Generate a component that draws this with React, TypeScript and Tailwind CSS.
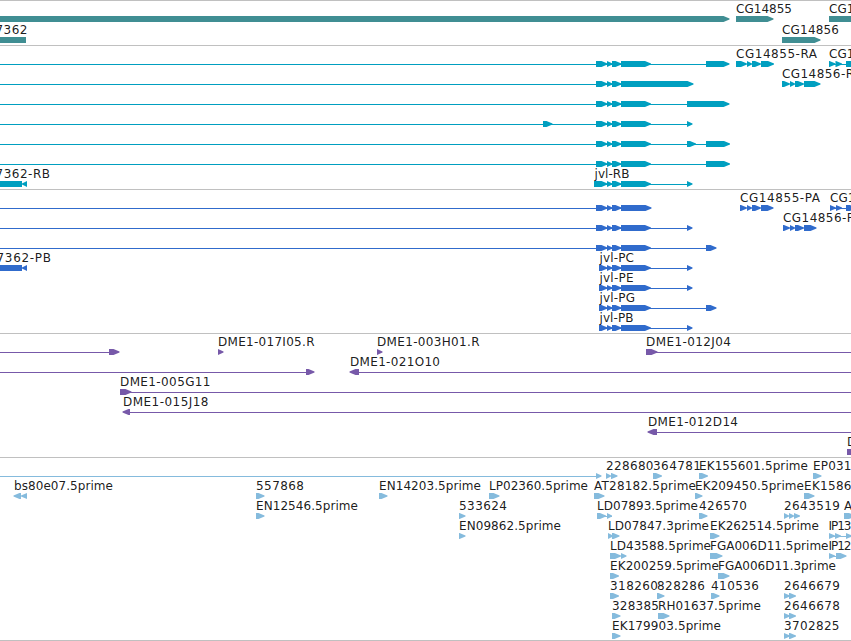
type Label = { text: string; x: number; width?: number };
type Feature = { from: number; to: number; reverse?: boolean; flat?: boolean };
type Row = { labels?: Label[]; features?: Feature[]; introns?: [number, number][] };

const EDGE = 851;

const label = (text: string, x: number, end?: number): Label => ({
  text,
  x,
  width: end === undefined ? undefined : end - x,
});

const fwd = (...spans: [number, number][]): Feature[] => spans.map(([from, to]) => ({ from, to }));
const rev = (...spans: [number, number][]): Feature[] =>
  spans.map(([from, to]) => ({ from, to, reverse: true }));
const flat = (from: number, to: number): Feature => ({ from, to, flat: true });

// Exons shared by every jvl isoform, after the first one
const jvl = (first: number, ...rest: [number, number][]) =>
  fwd([first, 607.5], [607, 612.5], [612, 621.5], ...rest);

const genes: Row[] = [
  {
    labels: [label("CG14855", 736, 792), label("CG1", 829)],
    features: [...fwd([-10, 729.5], [736, 773.5]), flat(829, EDGE)],
  },
  {
    labels: [label("7362", -4.5, 27.5), label("CG14856", 782, 839)],
    features: [flat(0, 26), ...fwd([782, 820.5])],
  },
];

const transcripts: Row[] = [
  {
    labels: [label("CG14855-RA", 736, 817), label("CG1", 829)],
    introns: [[0, 706], [829, EDGE]],
    features: [
      ...jvl(596, [621, 651], [706, 729.5]),
      ...fwd([736, 747], [747, 752], [752, 761], [761, 774]),
      ...fwd([829, 835.5], [835.5, 842], [846, 858]),
    ],
  },
  {
    labels: [label("CG14856-R", 782, 854)],
    introns: [[0, 621]],
    features: [
      ...jvl(596, [621, 693.5]),
      ...fwd([782, 790], [790, 795], [795, 804], [804, 820.5]),
    ],
  },
  { introns: [[0, 687]], features: jvl(596, [621, 651], [687, 729.5]) },
  { introns: [[0, 687]], features: [...fwd([543, 552.5]), ...jvl(596, [621, 651], [687, 692.5])] },
  { introns: [[0, 706]], features: jvl(596, [621, 651], [687, 696], [706, 730]) },
  { introns: [[0, 706]], features: jvl(596, [621, 651], [706, 730]) },
  {
    labels: [label("7362-RB", -4.5, 50), label("jvl-RB", 594.5, 629.5)],
    introns: [[594, 687]],
    features: [flat(0, 22), ...rev([22, 27]), ...jvl(594, [621, 651], [687, 692.5])],
  },
];

const proteins: Row[] = [
  {
    labels: [label("CG14855-PA", 740, 820), label("CG1", 830)],
    introns: [[0, 621], [830, EDGE]],
    features: [
      ...jvl(596, [621, 651.5]),
      ...fwd([740, 747], [747, 752], [752, 761], [761, 773.5]),
      ...fwd([830, 836], [836, 842], [846, 856]),
    ],
  },
  {
    labels: [label("CG14856-P", 783, 854)],
    introns: [[0, 687]],
    features: [
      ...jvl(596, [621, 651], [687, 692.5]),
      ...fwd([783, 790], [790, 795], [795, 804], [804, 816.5]),
    ],
  },
  { introns: [[0, 706]], features: jvl(596, [621, 651], [706, 716.5]) },
  {
    labels: [label("7362-PB", -3.5, 51), label("jvl-PC", 599.5, 634)],
    introns: [[599, 687]],
    features: [flat(0, 22), ...rev([22, 27]), ...jvl(599, [621, 651], [687, 692.5])],
  },
  {
    labels: [label("jvl-PE", 599.5, 633.5)],
    introns: [[599, 687]],
    features: jvl(599, [621, 651], [687, 692.5]),
  },
  {
    labels: [label("jvl-PG", 599.5, 635)],
    introns: [[599, 706]],
    features: jvl(599, [621, 651], [706, 716.5]),
  },
  {
    labels: [label("jvl-PB", 599.5, 633.5)],
    introns: [[599, 687]],
    features: jvl(599, [621, 651], [687, 692.5]),
  },
];

const clones: Row[] = [
  {
    labels: [label("DME1-017I05.R", 218, 314.5), label("DME1-003H01.R", 377, 479.5), label("DME1-012J04", 646, 731)],
    introns: [[0, 109], [646, EDGE]],
    features: fwd([109, 119.5], [218, 223.5], [377, 382.5], [646, 657.5]),
  },
  {
    labels: [label("DME1-021O10", 350, 440)],
    introns: [[0, 306], [359, EDGE]],
    features: [...fwd([306, 314.5]), ...rev([349.5, 359])],
  },
  { labels: [label("DME1-005G11", 120, 210.5)], introns: [[120, EDGE]], features: fwd([120, 131.5]) },
  { labels: [label("DME1-015J18", 123, 208.5)], introns: [[130, EDGE]], features: rev([122.5, 130]) },
  { labels: [label("DME1-012D14", 648, 738)], introns: [[657, EDGE]], features: rev([647.5, 657]) },
  { labels: [label("D", 847)], features: [flat(847, EDGE)] },
];

const ests: Row[] = [
  {
    labels: [
      label("228680", 606, 653.5),
      label("364781", 653, 701),
      label("EK155601.5prime", 699, 808),
      label("EP031", 813, 851.5),
    ],
    introns: [[0, 596]],
    features: fwd([596, 601.5], [606, 611], [611, 617.5], [653, 662], [699, 708], [813, 821.5]),
  },
  {
    labels: [
      label("bs80e07.5prime", 14, 113),
      label("557868", 256, 304),
      label("EN14203.5prime", 379, 481),
      label("LP02360.5prime", 489, 588),
      label("AT28182.5prime", 594, 696),
      label("EK209450.5prime", 695, 804),
      label("EK1586", 804, 851.5),
    ],
    features: [
      ...rev([13.5, 21], [21, 27]),
      ...fwd([256, 264.5], [379, 387.5], [489, 499.5], [594, 604.5], [695, 702.5], [804, 814.5]),
    ],
  },
  {
    labels: [
      label("EN12546.5prime", 256, 358),
      label("533624", 459, 507),
      label("LD07893.5prime", 597, 698),
      label("426570", 699, 747),
      label("2643519", 784, 840),
      label("A", 844),
    ],
    introns: [[597, 612]],
    features: fwd(
      [256, 264.5], [459, 465.5], [597, 606], [607, 612], [699, 707.5],
      [784, 789], [789, 794], [794, 800], [844, 855],
    ),
  },
  {
    labels: [
      label("EN09862.5prime", 459, 561),
      label("LD07847.3prime", 608, 709),
      label("EK262514.5prime", 710, 819),
      label("IP13", 828.5, 851.5),
    ],
    introns: [[829, EDGE]],
    features: fwd([459, 465.5], [608, 613], [612, 619.5], [710, 719.5], [829, 835], [835, 841], [846, 852]),
  },
  {
    labels: [
      label("LD43588.5prime", 610, 711),
      label("FGA006D11.5prime", 710, 828.5),
      label("IP12", 828.5, 851.5),
    ],
    introns: [[829, 840]],
    features: fwd([610, 621], [621, 626.5], [710, 722.5], [829, 835], [836, 846.5]),
  },
  {
    labels: [label("EK200259.5prime", 610, 719), label("FGA006D11.3prime", 718, 836)],
    features: fwd([610, 619], [718, 729.5]),
  },
  {
    labels: [
      label("318260", 610, 658),
      label("828286", 657, 705),
      label("410536", 711, 759),
      label("2646679", 784, 840),
    ],
    features: fwd([610, 619], [657, 664.5], [711, 719.5], [784, 790], [789, 796]),
  },
  {
    labels: [label("328385", 612, 659), label("RH01637.5prime", 658, 761), label("2646678", 784, 840)],
    features: fwd([612, 620.5], [658, 669.5], [784, 790], [789, 796]),
  },
  {
    labels: [label("EK179903.5prime", 612, 721), label("3702825", 784, 839.5)],
    features: fwd([612, 620.5], [784, 790], [789, 796]),
  },
];

// Rounded arrow: full height up to the head, a shoulder, then a one pixel tip
function outline({ from, to, reverse, flat }: Feature) {
  if (flat) return `${from},15 ${to},15 ${to},21 ${from},21`;
  const head = Math.min(6, to - from);
  const tip = reverse ? from : to;
  const back = reverse ? to : from;
  const dir = reverse ? 1 : -1;
  const neck = tip + dir * head;
  const shoulder = tip + dir * head * 0.4;
  return `${back},15 ${neck},15 ${shoulder},16.4 ${tip},17.6 ${tip},18.4 ${shoulder},19.6 ${neck},21 ${back},21`;
}

function FeatureRow({ row, className }: { row: Row; className: string }) {
  return (
    <svg width={EDGE} className={`block shrink-0 overflow-visible ${className}`}>
      {row.introns?.map(([from, to]) => (
        <rect key={from} x={from} y={18} width={to - from} height={1} fill="currentColor" />
      ))}
      {row.features?.map((f) => (
        <polygon key={f.from} points={outline(f)} fill="currentColor" />
      ))}
      {row.labels?.map((l) => (
        <text key={l.x} x={l.x} y={12} textLength={l.width} className="fill-black/90">
          {l.text}
        </text>
      ))}
    </svg>
  );
}

function Track({ rows, className, rowClass = "h-5" }: { rows: Row[]; className: string; rowClass?: string }) {
  return (
    <section className={`flex flex-col border-t border-[#c0c0c0] ${className}`}>
      {rows.map((row, i) => (
        <FeatureRow key={i} row={row} className={rowClass} />
      ))}
    </section>
  );
}

export default function App() {
  return (
    <main className="flex h-[641px] w-[851px] flex-col overflow-hidden border-b border-[#c0c0c0] bg-white font-['DejaVu_Sans',sans-serif] text-[12px]">
      <Track rows={genes} className="pb-0.5 text-[#408e93]" rowClass="h-[21px]" />
      <Track rows={transcripts} className="pb-[3px] text-[#009fc0]" />
      <Track rows={proteins} className="pb-[3px] text-[#306bcc]" />
      <Track rows={clones} className="pb-[3px] text-[#7759a9]" />
      <Track rows={ests} className="pb-0.5 text-[#85bbdd]" />
    </main>
  );
}
